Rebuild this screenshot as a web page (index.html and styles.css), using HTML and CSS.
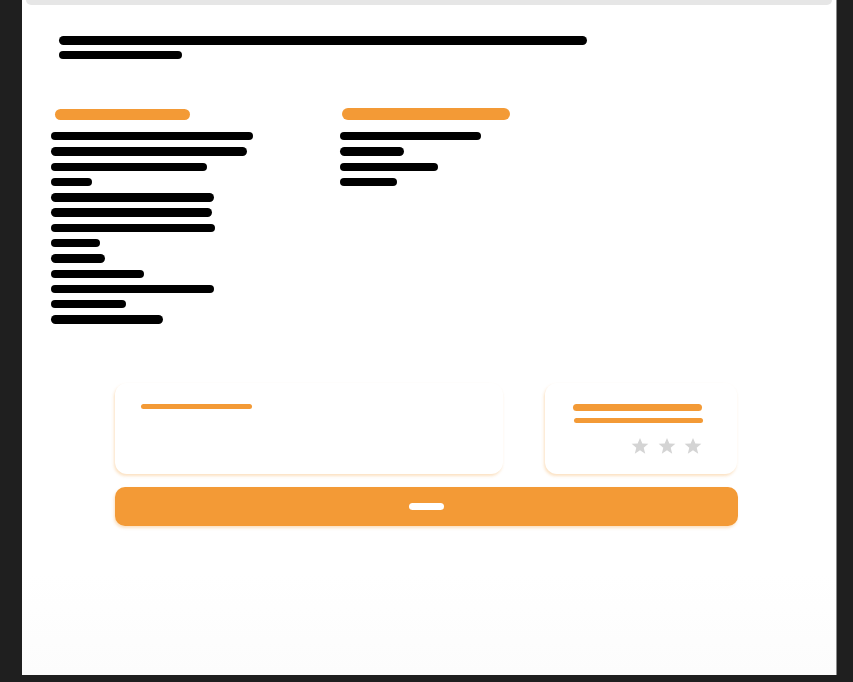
FILE: index.html
```html
<!DOCTYPE html>
<html lang="en">
<head>
  <meta charset="UTF-8">
  <meta name="viewport" content="width=device-width, initial-scale=1.0">
  <title>Order summary</title>

  <link rel="stylesheet" href="styles.css">
</head>
<body>
  <div class="panel">
    <div class="topbar"></div>

    <!--intro-->
    <div class="intro">
      <div class="bar w528"></div>
      <div class="bar w123"></div>
    </div>

    <div class="columns">
      <div class="col colLeft">
        <div class="heading hLeft"></div>
        <div class="list">
          <div class="line" style="width: 202px"></div>
          <div class="line" style="width: 196px"></div>
          <div class="line" style="width: 156px"></div>
          <div class="line" style="width: 41px"></div>
          <div class="line" style="width: 163px"></div>
          <div class="line" style="width: 161px"></div>
          <div class="line" style="width: 164px"></div>
          <div class="line" style="width: 49px"></div>
          <div class="line" style="width: 54px"></div>
          <div class="line" style="width: 93px"></div>
          <div class="line" style="width: 163px"></div>
          <div class="line" style="width: 75px"></div>
          <div class="line" style="width: 112px"></div>
        </div>
      </div>

      <div class="col colRight">
        <div class="heading hRight"></div>
        <div class="list">
          <div class="line" style="width: 141px"></div>
          <div class="line" style="width: 64px"></div>
          <div class="line" style="width: 98px"></div>
          <div class="line" style="width: 57px"></div>
        </div>
      </div>
    </div>

    <!--cards-->
    <div class="bottom">
      <div class="cards">
        <div class="card cardWide">
          <div class="accent a111"></div>
        </div>
        <div class="card cardSmall">
          <div class="accent a129 thick"></div>
          <div class="accent a129 shift"></div>
          <div class="stars">
            <svg viewBox="0 0 20 20" class="star"><polygon points="10,1 12.6,7.2 19.3,7.6 14.1,11.9 15.8,18.5 10,14.8 4.2,18.5 5.9,11.9 0.7,7.6 7.4,7.2"/></svg>
            <svg viewBox="0 0 20 20" class="star"><polygon points="10,1 12.6,7.2 19.3,7.6 14.1,11.9 15.8,18.5 10,14.8 4.2,18.5 5.9,11.9 0.7,7.6 7.4,7.2"/></svg>
            <svg viewBox="0 0 20 20" class="star"><polygon points="10,1 12.6,7.2 19.3,7.6 14.1,11.9 15.8,18.5 10,14.8 4.2,18.5 5.9,11.9 0.7,7.6 7.4,7.2"/></svg>
          </div>
        </div>
      </div>

      <button class="btnMain"><span class="btnLabel"></span></button>
    </div>
  </div>
</body>
</html>
```

FILE: styles.css
```css
body {
  font-family: "Liberation Sans", Arial, sans-serif;
  background-color: #1f1f1f;
  margin: 0;
  padding: 0;
  height: 682px;
  overflow: hidden;
}

.panel {
  margin-left: 22px;
  width: 815px;
  height: 675px;
  background-image: linear-gradient(to bottom, #ffffff 85%, #fcfcfc);
  border-right: 1px solid #8a8a8a;
  box-sizing: border-box;
}

.topbar {
  margin: 0 4px;
  height: 5px;
  background-color: #e6e6e6;
  border-radius: 0 0 8px 8px;
}

.intro {
  padding: 31px 0 0 37px;
  display: flex;
  flex-direction: column;
  gap: 6px;
}

.bar {
  height: 9px;
  background-color: #000;
  border-radius: 5px;
}

.w528 { width: 528px; }
.w123 { width: 123px; height: 8px; }

.columns {
  display: flex;
  margin-top: 49px;
}

.col {
  display: flex;
  flex-direction: column;
}

.colLeft {
  padding-left: 29px;
  width: 260px;
}

.colRight {
  padding-left: 29px;
}

.heading {
  background-color: #f39a36;
  border-radius: 6px;
}

.hLeft {
  margin: 1px 0 0 4px;
  width: 135px;
  height: 11px;
}

.hRight {
  margin-left: 2px;
  width: 168px;
  height: 12px;
}

.list {
  margin-top: 12px;
  display: flex;
  flex-direction: column;
  gap: 6.9px;
}

.line {
  height: 8.4px;
  background-color: #000;
  border-radius: 5px;
}

.bottom {
  margin: 59px 0 0 93px;
  width: 623px;
}

.cards {
  display: flex;
  gap: 42px;
}

.card {
  height: 91px;
  background-color: #fff;
  border-radius: 12px;
  box-shadow: -1px 2px 3px rgba(243, 154, 54, 0.3);
  box-sizing: border-box;
  padding-top: 21px;
}

.cardWide {
  width: 388px;
  padding-left: 26px;
}

.cardSmall {
  width: 192px;
  padding-left: 28px;
}

.accent {
  height: 5px;
  background-color: #f39a36;
  border-radius: 3px;
}

.a111 { width: 111px; }
.a129 { width: 129px; }
.thick { height: 7px; border-radius: 4px; }
.shift { margin: 7px 0 0 1px; }

.stars {
  display: flex;
  justify-content: flex-end;
  gap: 8.5px;
  margin: 14px 35px 0 0;
}

.star {
  width: 18px;
  height: 18px;
  fill: #d4d4d4;
}

.btnMain {
  display: flex;
  align-items: center;
  justify-content: center;
  margin-top: 13px;
  width: 623px;
  height: 39px;
  border: none;
  border-radius: 10px;
  background-color: #f39a36;
  box-shadow: -1px 2px 3px rgba(243, 154, 54, 0.3);
  cursor: pointer;
  padding: 0;
}

.btnLabel {
  display: block;
  width: 35px;
  height: 6.5px;
  background-color: #fff;
  border-radius: 4px;
}
```
